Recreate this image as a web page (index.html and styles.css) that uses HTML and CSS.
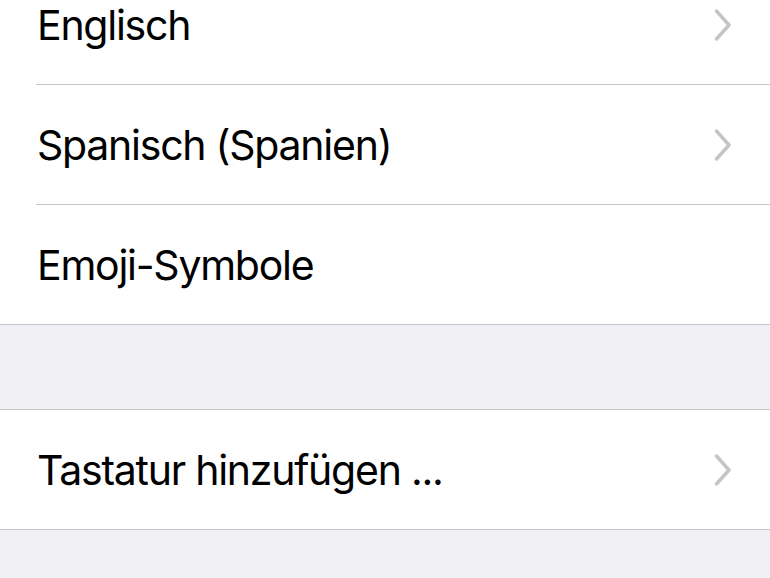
FILE: index.html
```html
<!DOCTYPE html>
<html lang="de">
<head>
<meta charset="utf-8">
<link rel="stylesheet" href="styles.css">
</head>
<body>
<div class="group group-first">
  <div class="row"><div class="cell"><span class="label">Englisch</span>
    <svg class="chev" width="18" height="32" viewBox="0 0 18 32"><polyline points="2.5,2 15,16 2.5,30" /></svg></div></div>
  <div class="row"><div class="cell"><span class="label">Spanisch (Spanien)</span>
    <svg class="chev" width="18" height="32" viewBox="0 0 18 32"><polyline points="2.5,2 15,16 2.5,30" /></svg></div></div>
  <div class="row"><div class="cell last"><span class="label">Emoji-Symbole</span></div></div>
</div>
<div class="group group-second">
  <div class="row"><div class="cell last"><span class="label">Tastatur hinzufügen ...</span>
    <svg class="chev" width="18" height="32" viewBox="0 0 18 32"><polyline points="2.5,2 15,16 2.5,30" /></svg></div></div>
</div>
</body>
</html>
```
FILE: styles.css
```css
html, body {
  margin: 0;
  padding: 0;
  background: #efeff4;
  height: 100%;
  overflow: hidden;
}
body {
  font-family: Inter, "Liberation Sans", sans-serif;
  color: #000;
}
.group {
  background: #fff;
  border-bottom: 1px solid #c8c7cc;
}
.group-first {
  margin-top: -35px;
}
.group-second {
  margin-top: 84px;
  border-top: 1px solid #c8c7cc;
}
.row {
  padding-left: 36px;
}
.cell {
  height: 119px;
  border-bottom: 1px solid #c8c7cc;
  display: flex;
  align-items: center;
  justify-content: space-between;
  padding-right: 38px;
}
.cell.last {
  height: 119px;
  border-bottom: none;
}
.label {
  font-size: 41px;
  letter-spacing: -1.25px;
  padding-left: 1px;
}
.chev polyline {
  fill: none;
  stroke: #c4c4c9;
  stroke-width: 3.4;
  stroke-linecap: round;
  stroke-linejoin: round;
}
```
